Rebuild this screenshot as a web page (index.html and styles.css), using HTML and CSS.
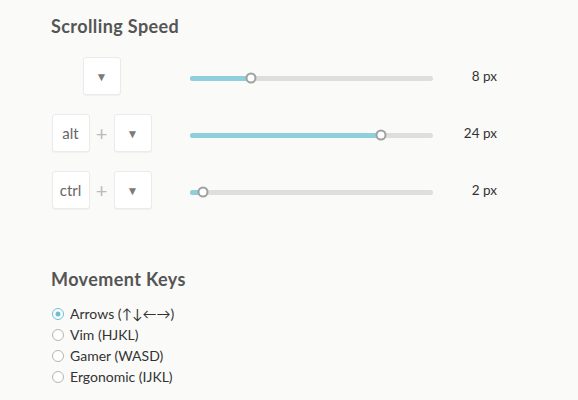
FILE: index.html
```html
<!DOCTYPE html>
<html>
<head>
<meta charset="utf-8">
<link rel="stylesheet" href="styles.css">
</head>
<body>
<div class="page">
  <h2 class="title">Scrolling Speed</h2>
  <div class="speed-rows">
    <div class="row">
      <div class="keys">
        <span class="key arrow">▼</span>
      </div>
      <div class="track"><div class="fill" style="width:25%"></div><div class="thumb" style="left:25%"></div></div>
      <div class="value">8 px</div>
    </div>
    <div class="row">
      <div class="keys">
        <span class="key">alt</span><span class="plus">+</span><span class="key arrow">▼</span>
      </div>
      <div class="track"><div class="fill" style="width:78.5%"></div><div class="thumb" style="left:78.5%"></div></div>
      <div class="value">24 px</div>
    </div>
    <div class="row">
      <div class="keys">
        <span class="key">ctrl</span><span class="plus">+</span><span class="key arrow">▼</span>
      </div>
      <div class="track"><div class="fill" style="width:5.5%"></div><div class="thumb" style="left:5.5%"></div></div>
      <div class="value">2 px</div>
    </div>
  </div>

  <h2 class="title title-2">Movement Keys</h2>
  <ul class="radios">
    <li class="radio-item"><span class="radio checked"></span>Arrows (↑↓←→)</li>
    <li class="radio-item"><span class="radio"></span>Vim (HJKL)</li>
    <li class="radio-item"><span class="radio"></span>Gamer (WASD)</li>
    <li class="radio-item"><span class="radio"></span>Ergonomic (IJKL)</li>
  </ul>
</div>
</body>
</html>
```

FILE: styles.css
```css
html, body {
  margin: 0;
  padding: 0;
  background: #fafaf8;
}
body {
  font-family: Lato, "Open Sans", sans-serif;
  color: #333;
}
.page {
  padding: 14px 0 0 51px;
}
.title {
  margin: 0;
  font-size: 18px;
  letter-spacing: 0.4px;
  font-weight: 700;
  color: #555;
  line-height: 24px;
}
.title-2 {
  margin-top: 58px;
}
.speed-rows {
  display: flex;
  flex-direction: column;
  gap: 19px;
  margin-top: 19px;
}
.row {
  display: grid;
  grid-template-columns: 139px 243px 64px;
  align-items: center;
  height: 38px;
}
.keys {
  width: 101px;
  display: flex;
  justify-content: center;
  align-items: center;
}
.key {
  box-sizing: border-box;
  width: 38px;
  height: 38px;
  display: flex;
  align-items: center;
  justify-content: center;
  background: #fff;
  border: 1px solid #ebebeb;
  border-radius: 3px;
  box-shadow: 0 1px 1px rgba(0,0,0,0.04);
  font-size: 15px;
  color: #666;
}
.key.arrow {
  font-size: 12px;
  color: #7a7a7a;
}
.plus {
  width: 24px;
  text-align: center;
  color: #bbb;
  font-size: 20px;
  font-weight: 400;
}
.track {
  position: relative;
  height: 5px;
  margin-top: 4px;
  border-radius: 3px;
  background: #dedede;
}
.fill {
  height: 100%;
  border-radius: 3px;
  background: #8ecfdb;
}
.thumb {
  position: absolute;
  top: 50%;
  width: 11px;
  height: 11px;
  box-sizing: border-box;
  border: 2px solid #a0a0a0;
  background: #fff;
  border-radius: 50%;
  transform: translate(-50%, -50%);
}
.value {
  text-align: right;
  font-size: 13.5px;
  color: #333;
}
.radios {
  list-style: none;
  margin: 12px 0 0 1px;
  padding: 0;
}
.radio-item {
  display: flex;
  align-items: center;
  height: 21px;
  font-size: 14px;
  color: #333;
}
.radio {
  box-sizing: border-box;
  width: 12px;
  height: 12px;
  border: 1.5px solid #b5b5b5;
  border-radius: 50%;
  margin-right: 6px;
  background: #fff;
  position: relative;
}
.radio.checked {
  border-color: #6fbfd0;
}
.radio.checked::after {
  content: "";
  position: absolute;
  left: 50%;
  top: 50%;
  width: 5px;
  height: 5px;
  border-radius: 50%;
  background: #6fbfd0;
  transform: translate(-50%, -50%);
}
```
